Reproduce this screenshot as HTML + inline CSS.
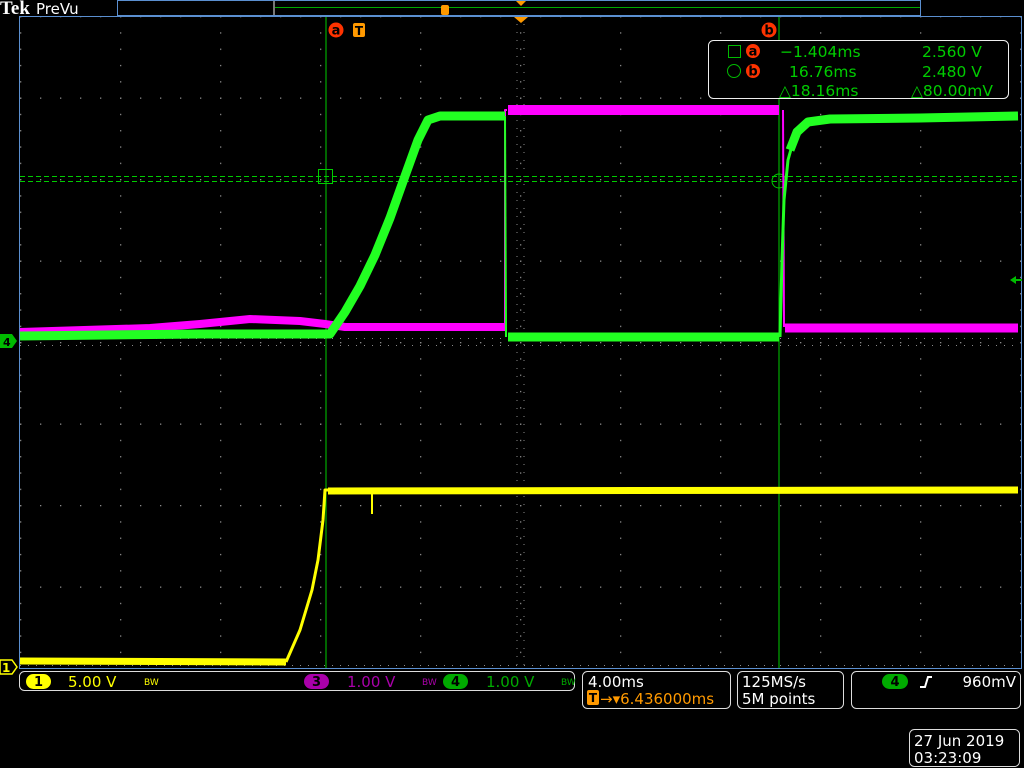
<!DOCTYPE html>
<html><head><meta charset="utf-8"><style>
body{margin:0;background:#000;width:1024px;height:768px;overflow:hidden;font-family:"DejaVu Sans","Liberation Sans",sans-serif}
svg{position:absolute;left:0;top:0}
</style></head><body>
<svg width="1024" height="768" viewBox="0 0 1024 768" xmlns="http://www.w3.org/2000/svg" font-family="DejaVu Sans, Liberation Sans, sans-serif">
<defs>
<pattern id="vdots" width="100" height="16.3" patternUnits="userSpaceOnUse" x="20" y="16">
<rect x="0" y="0" width="1.3" height="1.3" fill="#8a8a8a"/>
</pattern>
<pattern id="hdots" width="20" height="81.5" patternUnits="userSpaceOnUse" x="20" y="16">
<rect x="0" y="0" width="1.3" height="1.3" fill="#8a8a8a"/>
</pattern>
</defs>
<rect width="1024" height="768" fill="#000"/>
<rect x="20" y="16" width="1001" height="653" fill="url(#vdots)"/>
<rect x="20" y="16" width="1001" height="653" fill="url(#hdots)"/>
<g stroke="#8a8a8a" stroke-width="1" stroke-dasharray="1 7">
<line x1="517" y1="16" x2="517" y2="668"/><line x1="524" y1="16" x2="524" y2="668"/>
<line x1="20" y1="338.5" x2="1020" y2="338.5"/><line x1="20" y1="345.5" x2="1020" y2="345.5"/>
<line x1="20" y1="665.5" x2="1020" y2="665.5"/>
</g>
<text x="0" y="14" fill="#fff" font-family="Liberation Serif, serif" font-weight="bold" font-size="19">Tek</text>
<text x="36" y="14" fill="#fff" font-size="15">PreVu</text>
<rect x="117.5" y="0.5" width="803" height="15" fill="none" stroke="#5b8fd0" stroke-width="1"/>
<rect x="273" y="1" width="2" height="14" fill="#777"/>
<line x1="275" y1="7.5" x2="920" y2="7.5" stroke="#0a0" stroke-width="1"/>
<rect x="441" y="5" width="8" height="10" rx="2" fill="#f90"/>
<polygon points="516,1 526,1 521,6" fill="#f90"/>
<rect x="19.5" y="16.5" width="1002" height="652" fill="none" stroke="#5b8fd0" stroke-width="1"/>
<polygon points="514,17 528,17 521,23" fill="#f90"/>
<line x1="326" y1="17" x2="326" y2="668" stroke="#0c0" stroke-width="1"/>
<line x1="779" y1="17" x2="779" y2="668" stroke="#0c0" stroke-width="1"/>
<g stroke="#0c0" stroke-width="1" stroke-dasharray="5 3">
<line x1="20" y1="176.5" x2="1020" y2="176.5"/><line x1="20" y1="181.5" x2="1020" y2="181.5"/>
</g>
<rect x="318.5" y="169.5" width="14" height="14" fill="none" stroke="#0c0"/>
<circle cx="779" cy="181" r="7" fill="none" stroke="#0c0"/>
<circle cx="336" cy="30" r="7.5" fill="#f30"/><text x="336" y="34.5" fill="#000" font-size="13" font-weight="bold" text-anchor="middle">a</text>
<rect x="353" y="23" width="12" height="14" rx="2" fill="#f90"/><text x="359" y="35" fill="#000" font-size="12" font-weight="bold" text-anchor="middle">T</text>
<circle cx="769" cy="30" r="7.5" fill="#f30"/><text x="769" y="34.5" fill="#000" font-size="13" font-weight="bold" text-anchor="middle">b</text>
<rect x="708.5" y="40.5" width="300" height="58" rx="5" fill="#000" stroke="#eee" stroke-width="1"/>
<rect x="728.5" y="45.5" width="12" height="12" fill="none" stroke="#0b0"/>
<circle cx="734" cy="71" r="6.5" fill="none" stroke="#0b0"/>
<circle cx="753" cy="51" r="7" fill="#f30"/><text x="753" y="55.5" fill="#000" font-size="13" font-weight="bold" text-anchor="middle">a</text>
<circle cx="753" cy="71" r="7" fill="#f30"/><text x="753" y="75.5" fill="#000" font-size="13" font-weight="bold" text-anchor="middle">b</text>
<g fill="#0c0" font-size="15.5">
<text x="780" y="57">−1.404ms</text><text x="789" y="77">16.76ms</text><text x="779" y="96">△18.16ms</text>
<text x="922" y="57">2.560 V</text><text x="922" y="77">2.480 V</text><text x="911" y="96">△80.00mV</text>
</g>
<polygon points="0,334 12,334 17,341 12,348 0,348" fill="#0b0"/><text x="3" y="346" font-size="11" font-weight="bold" fill="#000">4</text>
<polygon points="0,660 12,660 17,667 12,674 0,674" fill="#000" stroke="#ff0" stroke-width="1.5"/><text x="2" y="672" font-size="12" font-weight="bold" fill="#ff0">1</text>
<polygon points="1010,280 1016,276 1016,279 1022,279 1022,281 1016,281 1016,284" fill="#0b0"/>
<g fill="none" stroke-linejoin="round">
<polyline stroke="#ff00ff" stroke-width="8" points="20,332 150,328 200,324 250,319 300,321 325,324 345,327 505,327"/>
<polyline stroke="#ff00ff" stroke-width="2" points="505,327 505,110 507,110"/>
<polyline stroke="#ff00ff" stroke-width="10" points="508,110 779,110"/>
<polyline stroke="#ff00ff" stroke-width="2" points="783,110 784,327"/>
<polyline stroke="#ff00ff" stroke-width="9" points="785,328 1018,328"/>
<polyline stroke="#22ff22" stroke-width="9" points="20,336 200,334 300,334 330,334 345,312 360,286 375,255 390,218 405,176 418,140 428,120 440,116 505,116"/>
<polyline stroke="#22ff22" stroke-width="2" points="505,116 506,337"/>
<polyline stroke="#22ff22" stroke-width="9" points="508,337 779,337"/>
<polyline stroke="#22ff22" stroke-width="3" points="780,337 782,260 784,200 788,160 795,135 805,123 820,120 900,119 1018,116"/>
<polyline stroke="#22ff22" stroke-width="9" points="790,150 797,132 808,122 830,119 920,118 1018,116"/>
<polyline stroke="#ffff00" stroke-width="7" points="20,661 286,662"/>
<polyline stroke="#ffff00" stroke-width="3" points="286,662 300,630 312,590 318,560 323,520 325,490 328,490"/>
<polyline stroke="#ffff00" stroke-width="7" points="328,491 1018,490"/>
<line x1="372" y1="490" x2="372" y2="514" stroke="#ff0" stroke-width="2"/>
</g>
<rect x="19.5" y="671.5" width="555" height="19" rx="5" fill="none" stroke="#ddd"/>
<rect x="26" y="674" width="25" height="15" rx="7.5" fill="#ff0"/><text x="38.5" y="686" fill="#000" font-size="13" font-weight="bold" text-anchor="middle">1</text>
<text x="68" y="687" fill="#ff0" font-size="15">5.00 V</text><text x="144" y="685" fill="#ff0" font-size="9">BW</text>
<rect x="304" y="674" width="25" height="15" rx="7.5" fill="#a0a"/><text x="316.5" y="686" fill="#000" font-size="13" font-weight="bold" text-anchor="middle">3</text>
<text x="347" y="687" fill="#a0a" font-size="15">1.00 V</text><text x="422" y="685" fill="#a0a" font-size="9">BW</text>
<rect x="443" y="674" width="25" height="15" rx="7.5" fill="#0a0"/><text x="455.5" y="686" fill="#000" font-size="13" font-weight="bold" text-anchor="middle">4</text>
<text x="486" y="687" fill="#0a0" font-size="15">1.00 V</text><text x="561" y="685" fill="#0a0" font-size="9">BW</text>
<rect x="582.5" y="671.5" width="148" height="37" rx="5" fill="none" stroke="#ddd"/>
<text x="588" y="687" fill="#fff" font-size="15">4.00ms</text>
<rect x="587" y="690" width="12" height="15" rx="2" fill="#f90"/><text x="593" y="702" fill="#000" font-size="12" font-weight="bold" text-anchor="middle">T</text>
<text x="600" y="704" fill="#f90" font-size="15">→▾6.436000ms</text>
<rect x="737.5" y="671.5" width="106" height="37" rx="5" fill="none" stroke="#ddd"/>
<text x="742" y="687" fill="#fff" font-size="15">125MS/s</text><text x="742" y="704" fill="#fff" font-size="15">5M points</text>
<rect x="851.5" y="671.5" width="169" height="37" rx="5" fill="none" stroke="#ddd"/>
<rect x="882" y="674" width="26" height="15" rx="7.5" fill="#0a0"/><text x="895" y="686" fill="#000" font-size="13" font-weight="bold" text-anchor="middle">4</text>
<path d="M920 687 L925 687 L928 677 L932 677" stroke="#fff" stroke-width="2" fill="none"/>
<text x="1016" y="687" fill="#fff" font-size="15" text-anchor="end">960mV</text>
<rect x="909.5" y="729.5" width="110" height="37" rx="5" fill="none" stroke="#ddd"/>
<text x="914" y="746" fill="#fff" font-size="15">27 Jun 2019</text><text x="914" y="763" fill="#fff" font-size="15">03:23:09</text>
</svg>
</body></html>
